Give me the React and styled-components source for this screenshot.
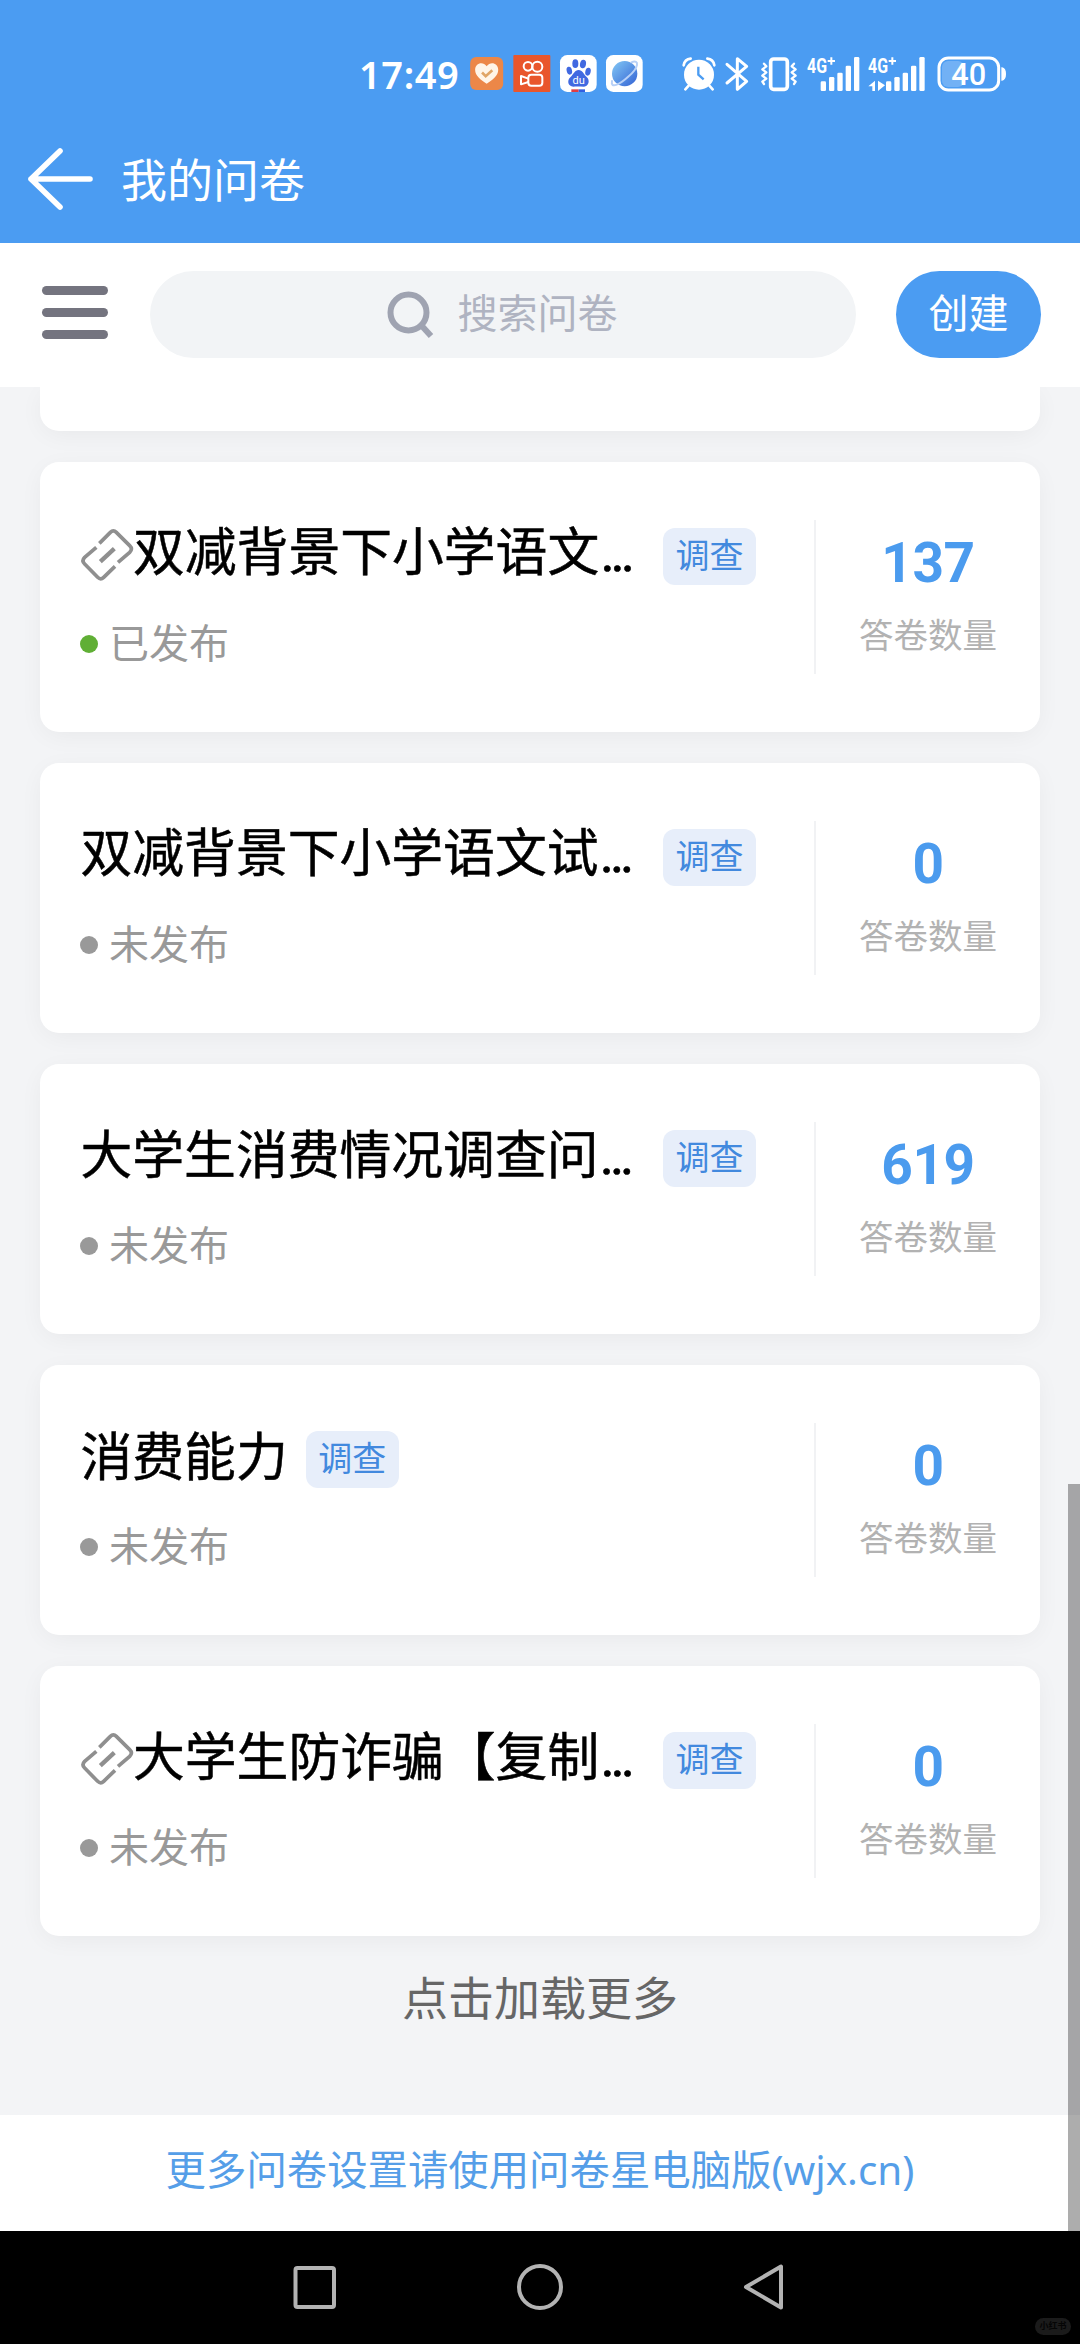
import styled, { createGlobalStyle } from 'styled-components';

const GlobalStyle = createGlobalStyle`
  * {
    box-sizing: border-box;
  }
  body {
    margin: 0;
    background: #f3f4f6;
    font-family: 'Noto Sans CJK SC', 'Noto Sans', sans-serif;
  }
  svg {
    display: block;
    flex: none;
    overflow: visible;
  }
`;

const Page = styled.div`
  position: relative;
  display: flex;
  flex-direction: column;
  width: 1080px;
  height: 2344px;
  overflow: hidden;
  background: #f3f4f6;
`;

const Header = styled.header`
  flex: none;
  height: 243px;
  background: #4b9cf2;
  color: #fff;
`;

const StatusBar = styled.div`
  display: flex;
  align-items: center;
  height: 116px;
  padding: 31px 73px 0 359px;
`;

const Clock = styled.div`
  width: 111px;
  font: 600 38px/44px 'Noto Sans', sans-serif;
  letter-spacing: 0.6px;
`;

const AppIcons = styled.div`
  display: flex;
  align-items: center;
  gap: 9px;
`;

const SystemIcons = styled.div`
  display: flex;
  align-items: center;
  margin-left: auto;
`;

const Gap = styled.span`
  width: ${({ $w }) => $w}px;
`;

const TitleBar = styled.div`
  display: flex;
  align-items: center;
  gap: 28px;
  height: 127px;
  padding-left: 27px;
`;

const PageTitle = styled.h1`
  margin: 0 0 6px;
  font-size: 46px;
  font-weight: 400;
  line-height: 60px;
`;

const Toolbar = styled.div`
  display: flex;
  flex: none;
  align-items: center;
  height: 144px;
  padding: 0 39px 1px 42px;
  background: #fff;
`;

const MenuButton = styled.div`
  display: flex;
  flex-direction: column;
  gap: 13px;
  width: 66px;
  margin: 0 42px 5px 0;
`;

const MenuLine = styled.span`
  height: 9px;
  border-radius: 5px;
  background: #74747f;
`;

const SearchBox = styled.div`
  display: flex;
  align-items: center;
  justify-content: center;
  gap: 24px;
  width: 706px;
  height: 87px;
  padding-right: 2px;
  border-radius: 44px;
  background: #f2f4f6;
  color: #afb3c1;
  font-size: 40px;
  line-height: 50px;
`;

const SearchText = styled.span`
  margin-top: -7px;
`;

const CreateButton = styled.div`
  width: 145px;
  height: 87px;
  margin-left: auto;
  border-radius: 44px;
  background: #4b9cf2;
  color: #fff;
  font-size: 40px;
  line-height: 81px;
  text-align: center;
`;

const List = styled.main`
  display: flex;
  flex: none;
  flex-direction: column;
  gap: 31.2px;
  height: 1728px;
  padding: 0 40px;
`;

const Card = styled.section`
  display: flex;
  flex: none;
  align-items: center;
  height: 270px;
  padding-left: 40px;
  border-radius: 19px;
  background: #fff;
  box-shadow: 0 5px 26px -3px rgba(0, 0, 0, 0.055);
`;

const CardEnd = styled(Card)`
  height: 43.5px;
  border-radius: 0 0 19px 19px;
  clip-path: inset(0 -40px -40px);
`;

const Info = styled.div`
  width: 734px;
  height: 270px;
  padding-top: 57px;
`;

const TitleRow = styled.div`
  display: flex;
  align-items: center;
  height: 72px;
`;

const Name = styled.div`
  display: flex;
  align-items: center;
  max-width: 565px;
  min-width: ${({ $cut }) => ($cut ? '565px' : '0')};
  margin-right: 18px;
  color: #000;
  font-size: 51.8px;
  line-height: 70px;
  white-space: nowrap;
`;

const NameText = styled.span`
  margin: -8px 0 0 ${({ $linked }) => ($linked ? '-1px' : '0.5px')};
  -webkit-text-stroke: 0.5px #000;
`;

const Dots = styled.span`
  margin-left: 1px;
  font-family: Roboto, sans-serif;
  font-size: 56px;
  letter-spacing: -4.6px;
`;

const Tag = styled.span`
  flex: none;
  width: 93px;
  height: 57px;
  margin-top: 3px;
  border-radius: 12px;
  background: #e7eefa;
  color: #4289de;
  font-size: 34px;
  line-height: 51px;
  text-align: center;
`;

const Status = styled.div`
  display: flex;
  align-items: center;
  gap: 11px;
  margin-top: 22px;
  color: #999;
  font-size: 40px;
  line-height: 56px;
`;

const Dot = styled.i`
  width: 18px;
  height: 18px;
  margin-top: 6px;
  border-radius: 50%;
  background: ${({ $on }) => ($on ? '#60af35' : '#999')};
`;

const Answers = styled.div`
  display: flex;
  flex: 1;
  flex-direction: column;
  align-items: center;
  height: 154px;
  border-left: 2px solid #f1f2f4;
`;

const Count = styled.div`
  margin-top: 13px;
  color: #4b9bee;
  font: 700 55px/60px Roboto, sans-serif;
  letter-spacing: -0.4px;
`;

const CountLabel = styled.div`
  margin-top: 16px;
  color: #b2b2b2;
  font-size: 34.5px;
  line-height: 48px;
`;

const LoadMore = styled.div`
  margin-top: -1px;
  color: #666;
  font-size: 46px;
  line-height: 56px;
  text-align: center;
`;

const Notice = styled.footer`
  flex: none;
  height: 116px;
  background: #fff;
  color: #559ee8;
  font-family: 'Noto Sans', 'Noto Sans CJK SC', sans-serif;
  font-size: 40.4px;
  line-height: 110px;
  text-align: center;
`;

const NavBar = styled.nav`
  position: relative;
  display: flex;
  flex: none;
  gap: 181px;
  height: 113px;
  padding: 33px 0 0 293px;
  background: #000;
`;

const Watermark = styled.span`
  position: absolute;
  right: 9px;
  bottom: 9px;
  width: 36px;
  height: 17px;
  border-radius: 9px;
  background: #1b1b1b;
  color: #050505;
  font-size: 9px;
  font-weight: 700;
  line-height: 16px;
  text-align: center;
`;

const ScrollThumb = styled.div`
  position: absolute;
  top: 1484px;
  right: 0;
  width: 12px;
  height: 747px;
  background: rgba(0, 0, 0, 0.32);
`;

const HeartIcon = () => (
  <svg width="34" height="33" viewBox="0 0 102 100">
    <rect width="100" height="100" rx="18" fill="#ec8748" />
    <path d="M50 81 C32 70 15 57 15 39 C15 18 39 12 50 28 C61 12 85 18 85 39 C85 57 68 70 50 81Z" fill="#fff5e8" />
    <path d="M36 47 L47 58 L67 40" fill="none" stroke="#e0a566" strokeWidth="8" />
  </svg>
);

const VideoIcon = () => (
  <svg width="38" height="37" viewBox="0 0 114 111">
    <rect x="1" width="111" height="111" rx="3" fill="#e9562c" />
    <g fill="none" stroke="#fff" strokeWidth="6" strokeLinejoin="round">
      <circle cx="45" cy="34" r="13" />
      <circle cx="73" cy="35" r="15" />
      <rect x="46" y="59" width="42" height="33" rx="9" />
      <path d="M46 71 L24 63 V88 L46 81" />
    </g>
  </svg>
);

const PawIcon = () => (
  <svg width="37" height="37" viewBox="0 0 111 111">
    <rect width="110" height="111" rx="22" fill="#fff" />
    <g fill="#4169e1">
      <ellipse cx="46" cy="26" rx="9" ry="13" />
      <ellipse cx="69" cy="27" rx="9" ry="13" transform="rotate(10 69 27)" />
      <ellipse cx="28" cy="47" rx="8" ry="12" transform="rotate(-14 28 47)" />
      <ellipse cx="84" cy="50" rx="8" ry="12" transform="rotate(14 84 50)" />
      <path d="M56 45 C67 45 72 59 80 66 C91 76 86 94 72 95 C62 95 50 94 40 95 C24 95 20 77 31 67 C40 59 44 45 56 45Z" />
    </g>
    <text x="56" y="88" fill="#fff" fontFamily="Roboto" fontSize="33" textAnchor="middle">du</text>
    <path d="M34 103 H56 V111 H34Z" fill="#df3d43" />
    <path d="M56 103 H75 V111 H56Z" fill="#345fe0" />
  </svg>
);

const PlanetIcon = () => (
  <svg width="37" height="37" viewBox="0 0 111 111">
    <defs>
      <linearGradient id="planet" x1="0" y1="0" x2="1" y2="1">
        <stop offset="0" stopColor="#83c8f5" />
        <stop offset="1" stopColor="#3262d4" />
      </linearGradient>
    </defs>
    <rect width="110" height="111" rx="22" fill="#fff" />
    <circle cx="56" cy="56" r="38" fill="url(#planet)" />
    <path d="M76 22 C102 12 98 38 68 64 C40 90 13 102 18 78" fill="none" stroke="#b7d0f7" strokeWidth="6" strokeLinecap="round" />
  </svg>
);

const AlarmIcon = () => (
  <svg width="34" height="34" viewBox="0 0 102 102">
    <circle cx="51" cy="53" r="45" fill="#fff" />
    <g fill="none" stroke="#fff" strokeWidth="8" strokeLinecap="round">
      <path d="M5 25 Q8 7 26 5 M76 5 Q94 7 97 25 M20 86 L10 97 M82 86 L92 97" />
    </g>
    <path d="M49 29 V53 L65 67" fill="none" stroke="#4b9cf2" strokeWidth="7" />
  </svg>
);

const BluetoothIcon = () => (
  <svg width="24" height="36" viewBox="0 0 72 108" fill="none" stroke="#fff" strokeWidth="9" strokeLinecap="round" strokeLinejoin="round">
    <path d="M6 25 L65 76 L37 100 V8 L65 31 L6 81" />
  </svg>
);

const VibrateIcon = () => (
  <svg width="38" height="36" viewBox="0 0 114 108" fill="none" stroke="#fff" strokeLinecap="round" strokeLinejoin="round">
    <rect x="32" y="9" width="50" height="91" rx="9" strokeWidth="11" />
    <path d="M12 23 L19 31 L7 40 L19 49 L7 59 L19 68 L7 77 L12 84" strokeWidth="7" />
    <path d="M102 23 L95 31 L107 40 L95 49 L107 59 L95 68 L107 77 L102 84" strokeWidth="7" />
  </svg>
);

const SignalIcon = ({ data }) => (
  <svg width={data ? 57 : 53} height="36" viewBox={data ? '0 0 171 108' : '0 0 159 108'} fill="#fff">
    <text x="0" y="51" fontFamily="Roboto" fontSize="63" fontWeight="700" textLength="60" lengthAdjust="spacingAndGlyphs">4G</text>
    <path d="M70 4 h6 v8 h8 v6 h-8 v8 h-6 v-8 h-8 v-6 h8Z" />
    <g transform={data ? 'translate(13 0)' : undefined}>
      <rect x="41" y="76" width="16" height="29" rx="4" />
      <rect x="66" y="63" width="16" height="42" rx="4" />
      <rect x="91" y="50" width="16" height="55" rx="4" />
      <rect x="116" y="29" width="16" height="76" rx="4" />
      <rect x="141" y="3" width="16" height="102" rx="4" />
    </g>
    {data && <path d="M21 74 V105 H13 V91 H1Z M30 74 V105 L51 88Z" />}
  </svg>
);

const BatteryIcon = () => (
  <svg width="70" height="36" viewBox="0 0 210 108">
    <rect x="6" y="6" width="179" height="96" rx="28" fill="none" stroke="#fff" strokeWidth="9" />
    <rect x="15" y="15" width="66" height="78" rx="18" fill="#fff" opacity="0.22" />
    <path d="M195 36 Q205 38 205 54 Q205 70 195 72Z" fill="#fff" stroke="#fff" strokeWidth="4" />
    <text x="95" y="87" fill="#fff" fontFamily="Roboto" fontSize="92" fontWeight="500" textAnchor="middle">40</text>
  </svg>
);

const BackIcon = () => (
  <svg width="66" height="64" viewBox="0 0 66 64" fill="none" stroke="#fff" strokeWidth="5.6" strokeLinecap="round" strokeLinejoin="round">
    <path d="M33 3 L4 31 L33 59 M4 31 H63" />
  </svg>
);

const SearchIcon = () => (
  <svg width="47" height="47" viewBox="0 0 47 47" fill="none" stroke="#9fa3b1" strokeWidth="6">
    <circle cx="21.5" cy="21.5" r="18" />
    <path d="M34 34 L44 45" />
  </svg>
);

const LinkIcon = () => (
  <svg width="54" height="54" viewBox="0 0 162 162" fill="none" stroke="#8f8f8f" strokeWidth="11">
    <path d="M58 46 L91 13 Q100 4 109 13 L149 53 Q159 63 149 73 L114 103" />
    <path d="M49 58 L14 88 Q4 98 14 108 L53 148 Q62 157 71 148 L105 115" />
    <path d="M61 101 L103 62" strokeWidth="13" />
  </svg>
);

const NavIcons = () => (
  <>
    <svg width="43" height="50" viewBox="0 0 43 50" fill="none" stroke="#b3b3b3" strokeWidth="4">
      <rect x="2.5" y="4" width="38.5" height="39" rx="2" />
    </svg>
    <svg width="46" height="50" viewBox="0 0 46 50" fill="none" stroke="#b3b3b3" strokeWidth="4">
      <circle cx="23" cy="23" r="21" />
    </svg>
    <svg width="42" height="50" viewBox="0 0 42 50" fill="none" stroke="#b3b3b3" strokeWidth="4" strokeLinejoin="round">
      <path d="M37 2.5 V43.5 L2 23Z" />
    </svg>
  </>
);

const surveys = [
  { name: '双减背景下小学语文', cut: true, linked: true, published: true, count: 137 },
  { name: '双减背景下小学语文试', cut: true, count: 0 },
  { name: '大学生消费情况调查问', cut: true, count: 619 },
  { name: '消费能力', count: 0 },
  { name: '大学生防诈骗【复制', cut: true, linked: true, count: 0 },
];

const SurveyCard = ({ survey }) => (
  <Card>
    <Info>
      <TitleRow>
        <Name $cut={survey.cut}>
          {survey.linked && <LinkIcon />}
          <NameText $linked={survey.linked}>
            {survey.name}
            {survey.cut && <Dots>...</Dots>}
          </NameText>
        </Name>
        <Tag>调查</Tag>
      </TitleRow>
      <Status>
        <Dot $on={survey.published} />
        {survey.published ? '已发布' : '未发布'}
      </Status>
    </Info>
    <Answers>
      <Count>{survey.count}</Count>
      <CountLabel>答卷数量</CountLabel>
    </Answers>
  </Card>
);

const App = () => (
  <Page>
    <GlobalStyle />
    <Header>
      <StatusBar>
        <Clock>17:49</Clock>
        <AppIcons>
          <HeartIcon />
          <VideoIcon />
          <PawIcon />
          <PlanetIcon />
        </AppIcons>
        <SystemIcons>
          <AlarmIcon />
          <Gap $w={9} />
          <BluetoothIcon />
          <Gap $w={11} />
          <VibrateIcon />
          <Gap $w={9} />
          <SignalIcon />
          <Gap $w={8} />
          <SignalIcon data />
          <Gap $w={12} />
          <BatteryIcon />
        </SystemIcons>
      </StatusBar>
      <TitleBar>
        <BackIcon />
        <PageTitle>我的问卷</PageTitle>
      </TitleBar>
    </Header>
    <Toolbar>
      <MenuButton>
        <MenuLine />
        <MenuLine />
        <MenuLine />
      </MenuButton>
      <SearchBox>
        <SearchIcon />
        <SearchText>搜索问卷</SearchText>
      </SearchBox>
      <CreateButton>创建</CreateButton>
    </Toolbar>
    <List>
      <CardEnd />
      {surveys.map((survey) => (
        <SurveyCard key={survey.name} survey={survey} />
      ))}
      <LoadMore>点击加载更多</LoadMore>
    </List>
    <Notice>更多问卷设置请使用问卷星电脑版(wjx.cn)</Notice>
    <NavBar>
      <NavIcons />
      <Watermark>小红书</Watermark>
    </NavBar>
    <ScrollThumb />
  </Page>
);

export default App;
